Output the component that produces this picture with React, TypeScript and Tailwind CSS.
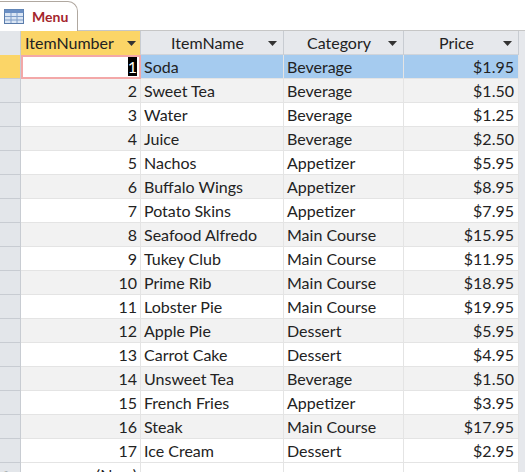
const rows: [number, string, string, string][] = [
  [1, "Soda", "Beverage", "$1.95"],
  [2, "Sweet Tea", "Beverage", "$1.50"],
  [3, "Water", "Beverage", "$1.25"],
  [4, "Juice", "Beverage", "$2.50"],
  [5, "Nachos", "Appetizer", "$5.95"],
  [6, "Buffalo Wings", "Appetizer", "$8.95"],
  [7, "Potato Skins", "Appetizer", "$7.95"],
  [8, "Seafood Alfredo", "Main Course", "$15.95"],
  [9, "Tukey Club", "Main Course", "$11.95"],
  [10, "Prime Rib", "Main Course", "$18.95"],
  [11, "Lobster Pie", "Main Course", "$19.95"],
  [12, "Apple Pie", "Dessert", "$5.95"],
  [13, "Carrot Cake", "Dessert", "$4.95"],
  [14, "Unsweet Tea", "Beverage", "$1.50"],
  [15, "French Fries", "Appetizer", "$3.95"],
  [16, "Steak", "Main Course", "$17.95"],
  [17, "Ice Cream", "Dessert", "$2.95"],
];

function Arrow() {
  return (
    <svg width="9" height="5" viewBox="0 0 9 5" className="shrink-0">
      <path d="M0 0h9L4.5 5z" fill="#333" />
    </svg>
  );
}

export default function App() {
  const grid = "grid grid-cols-[21px_120px_143px_120px_115px_6px]";
  return (
    <div className="w-[525px] h-[472px] overflow-hidden bg-white text-[16px] text-[#222]" style={{ fontFamily: "Lato, 'Noto Sans', sans-serif" }}>
      {/* Tab strip */}
      <div className="h-[31px] flex items-end border-b border-[#c6c6c6] bg-white">
        <div className="h-[30px] w-[78px] flex items-center gap-2 pl-1 border-t border-r border-[#b0a8a0] rounded-tr-[10px] bg-white relative top-[1px]">
          <svg width="20" height="15" viewBox="0 0 20 15">
            <rect x="0.5" y="0.5" width="19" height="14" fill="#dbe6f4" stroke="#5a7cab" />
            <rect x="0.5" y="0.5" width="19" height="3.5" fill="#6b8fc4" />
            <path d="M7 4v10M13 4v10M1 7.5h18M1 11h18" stroke="#7d9cc8" />
          </svg>
          <span className="font-bold text-[#a4262c] text-[14px]">Menu</span>
        </div>
      </div>
      {/* Header */}
      <div className={`${grid} h-[24px] bg-[#e6e8ec] border-b border-[#d0d4da]`}>
        <div className="border-r border-[#c8ccd2] bg-[#e3e6ea]" />
        <div className="flex items-center justify-between px-1 bg-[#fbd567] border-r border-[#c8ccd2]">
          <span>ItemNumber</span><Arrow />
        </div>
        <div className="flex items-center justify-between px-1.5 border-r border-[#c8ccd2]">
          <span className="flex-1 text-center">ItemName</span><Arrow />
        </div>
        <div className="flex items-center justify-between px-1.5 border-r border-[#c8ccd2]">
          <span className="flex-1 text-center">Category</span><Arrow />
        </div>
        <div className="flex items-center justify-between px-1.5 border-r border-[#c8ccd2]">
          <span className="flex-1 text-center">Price</span><Arrow />
        </div>
        <div className="bg-[#e6e8ec]" />
      </div>
      {rows.map(([n, name, cat, price], i) => {
        const sel = i === 0;
        const bg = sel ? "bg-[#a5cbef]" : i % 2 ? "bg-[#f2f2f2]" : "bg-white";
        return (
          <div key={n} className={`${grid} h-[24px] leading-[23px]`}>
            <div className={`border-r border-b border-[#c8ccd2] ${sel ? "bg-[#fbd567]" : "bg-[#e3e6ea]"}`} />
            <div className={`text-right pr-[3px] border-r border-b border-[#e4e4e4] ${sel ? "bg-white outline outline-2 -outline-offset-2 outline-[#f3a8a8]" : bg}`}>
              {sel ? <span className="bg-black text-white">{n}</span> : n}
            </div>
            <div className={`pl-[3px] border-r border-b border-[#e4e4e4] ${bg}`}>{name}</div>
            <div className={`pl-[3px] border-r border-b border-[#e4e4e4] ${bg}`}>{cat}</div>
            <div className={`text-right pr-[4px] border-r border-b border-[#e4e4e4] ${bg}`}>{price}</div>
            <div className="bg-[#e6e8ec]" />
          </div>
        );
      })}
      <div className={`${grid} h-[24px] leading-[23px]`}>
        <div className="bg-[#e3e6ea] border-r border-[#c8ccd2] text-[10px] pl-1 text-[#666]">*</div>
        <div className="text-right pr-[3px] border-r border-[#e4e4e4]">(New)</div>
        <div className="border-r border-[#e4e4e4]" />
        <div className="border-r border-[#e4e4e4]" />
        <div className="border-r border-[#e4e4e4]" />
        <div className="bg-[#e6e8ec]" />
      </div>
    </div>
  );
}
